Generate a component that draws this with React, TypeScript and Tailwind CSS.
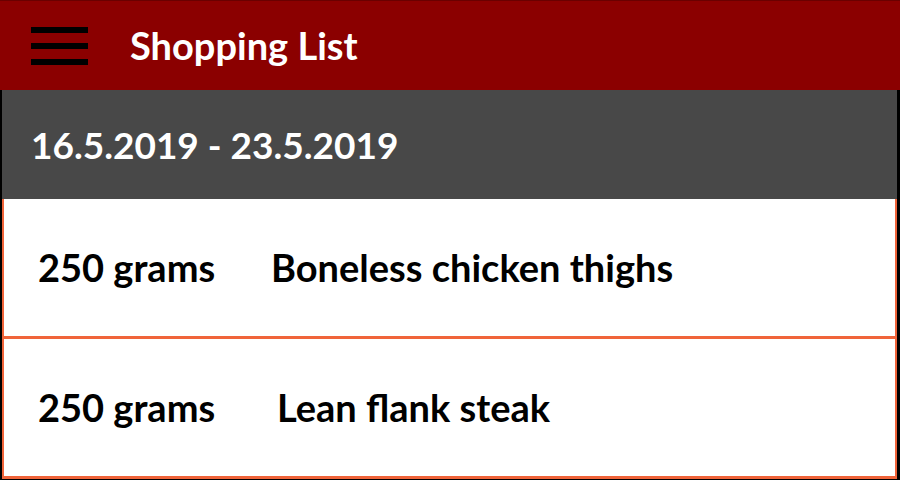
import React from "react";

const font = { fontFamily: 'Lato, "Open Sans", "Liberation Sans", sans-serif' };

function Row({ qty, name, nameX }: { qty: string; name: string; nameX: string }) {
  return (
    <div className="flex h-[140px] items-center border-x-2 border-b-[3px] border-[#f0643a] bg-white">
      <span className="ml-[34px] w-[233px] text-[38px] font-bold text-black">{qty}</span>
      <span className={`${nameX} text-[38px] font-bold text-black`}>{name}</span>
    </div>
  );
}

export default function App() {
  return (
    <div className="h-[480px] w-[900px] overflow-hidden bg-black" style={font}>
      <header className="flex h-[90px] items-center border-t border-[#6a0000] bg-[#8b0000]">
        <div className="ml-[31px] flex w-[57px] flex-col gap-[10px]">
          <span className="h-[6px] bg-black" />
          <span className="h-[6px] bg-black" />
          <span className="h-[6px] bg-black" />
        </div>
        <h1 className="ml-[42px] text-[38px] font-bold text-white">Shopping List</h1>
      </header>
      <div className="ml-[2px] mr-[3px]">
        <div className="flex h-[109px] items-center bg-[#484848] pl-[29px]">
          <span className="text-[37px] font-bold text-white">16.5.2019 - 23.5.2019</span>
        </div>
        <Row qty="250 grams" name="Boneless chicken thighs" nameX="ml-0" />
        <Row qty="250 grams" name="Lean flank steak" nameX="ml-[6px]" />
      </div>
    </div>
  );
}
